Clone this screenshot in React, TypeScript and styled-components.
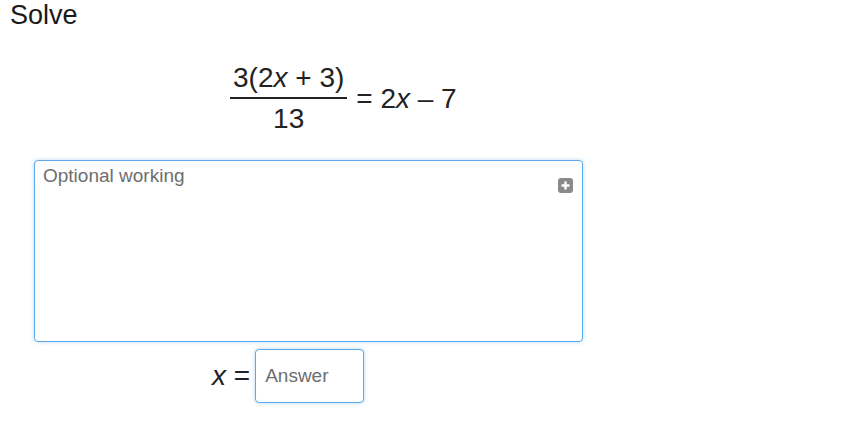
import styled, { createGlobalStyle } from "styled-components";

const GlobalStyle = createGlobalStyle`
  body {
    margin: 0;
    background: #ffffff;
    font-family: "Liberation Sans", Arial, sans-serif;
    color: #222222;
  }
`;

const Page = styled.div`
  width: 841px;
  height: 436px;
  overflow: hidden;
`;

const Title = styled.h1`
  margin: 0;
  padding-left: 10px;
  font-size: 27px;
  line-height: 31px;
  font-weight: 400;
  color: #1a1a1a;
`;

const Equation = styled.div`
  display: flex;
  align-items: center;
  margin-top: 33px;
  padding-left: 230px;
  font-size: 28px;
  line-height: 28px;
`;

const Fraction = styled.div`
  display: inline-flex;
  flex-direction: column;
  align-items: stretch;
  text-align: center;
`;

const Numerator = styled.div`
  padding: 0 3px 5px;
  border-bottom: 2px solid #222222;
  white-space: nowrap;
`;

const Denominator = styled.div`
  padding-top: 6px;
`;

const Rhs = styled.div`
  margin-left: 9px;
  white-space: nowrap;
`;

const Var = styled.i`
  font-style: italic;
`;

const Working = styled.div`
  position: relative;
  margin-top: 27px;
  margin-left: 34px;
  width: 549px;
  height: 182px;
`;

const WorkingArea = styled.textarea`
  box-sizing: border-box;
  width: 100%;
  height: 100%;
  margin: 0;
  padding: 4px 8px;
  resize: none;
  border: 1px solid #5aaaeb;
  border-radius: 4px;
  box-shadow: 0 0 4px rgba(102, 175, 233, 0.45);
  font-family: "Liberation Sans", Arial, sans-serif;
  font-size: 19px;
  color: #222222;
  outline: none;

  &::placeholder {
    color: #6e6e6e;
  }
`;

const ExpandButton = styled.button`
  position: absolute;
  top: 18px;
  right: 10px;
  width: 15px;
  height: 15px;
  padding: 0;
  border: none;
  background: none;
  display: flex;
  cursor: pointer;
`;

const AnswerRow = styled.div`
  display: flex;
  align-items: center;
  margin-top: 7px;
  padding-left: 212px;
  font-size: 28px;
`;

const AnswerLabel = styled.span`
  margin-right: 5px;
  white-space: nowrap;
`;

const AnswerInput = styled.input`
  box-sizing: border-box;
  width: 109px;
  height: 54px;
  margin: 0;
  padding: 0 9px;
  border: 1px solid #5aaaeb;
  border-radius: 4px;
  box-shadow: 0 0 4px rgba(102, 175, 233, 0.45);
  font-family: "Liberation Sans", Arial, sans-serif;
  font-size: 19px;
  color: #222222;
  outline: none;

  &::placeholder {
    color: #6e6e6e;
  }
`;

function PlusSquare() {
  return (
    <svg width="15" height="15" viewBox="0 0 15 15">
      <rect x="0" y="0" width="15" height="15" rx="3" fill="#8a8a8a" />
      <path d="M7.5 3.5v8M3.5 7.5h8" stroke="#ffffff" strokeWidth="2.4" />
    </svg>
  );
}

export default function App() {
  return (
    <Page>
      <GlobalStyle />
      <Title>Solve</Title>
      <Equation>
        <Fraction>
          <Numerator>
            3(2<Var>x</Var> + 3)
          </Numerator>
          <Denominator>13</Denominator>
        </Fraction>
        <Rhs>
          = 2<Var>x</Var> – 7
        </Rhs>
      </Equation>
      <Working>
        <WorkingArea placeholder="Optional working" />
        <ExpandButton aria-label="Expand">
          <PlusSquare />
        </ExpandButton>
      </Working>
      <AnswerRow>
        <AnswerLabel>
          <Var>x</Var> =
        </AnswerLabel>
        <AnswerInput placeholder="Answer" />
      </AnswerRow>
    </Page>
  );
}
